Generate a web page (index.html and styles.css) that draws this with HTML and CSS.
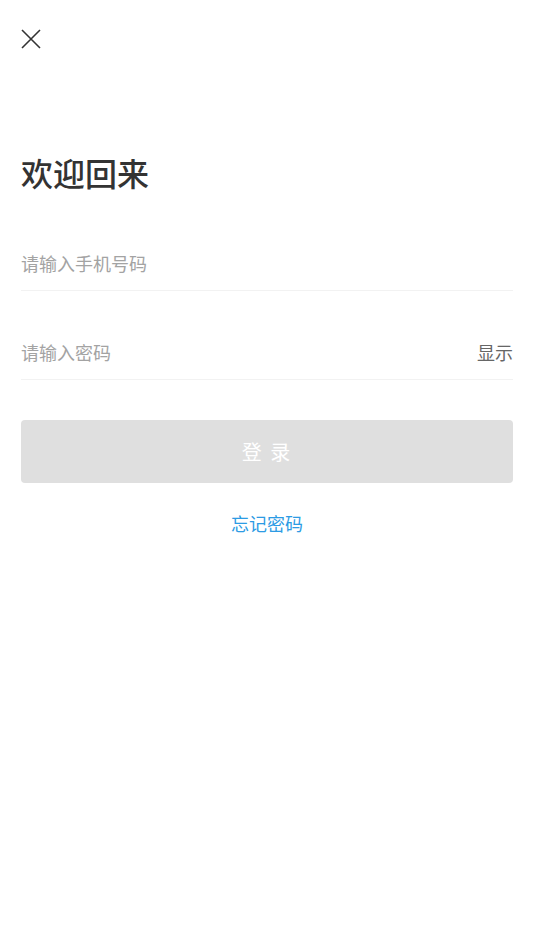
FILE: index.html
```html
<!DOCTYPE html>
<html lang="zh-CN">
<head>
    <meta charset="UTF-8">
    <meta name="viewport" content="width=device-width, initial-scale=1.0">
    <title>登录</title>
    <link rel="stylesheet" href="styles.css">
</head>
<body>
    <div class="page">
        <!-- Close button -->
        <div class="topbar">
            <svg class="close" width="20" height="20" viewBox="0 0 20 20">
                <path d="M1 1 L19 19 M19 1 L1 19" stroke="#333" stroke-width="1.6" fill="none"/>
            </svg>
        </div>

        <h1 class="title">欢迎回来</h1>

        <!-- Login form -->
        <form class="login-form">
            <div class="field">
                <input type="text" class="field-input" placeholder="请输入手机号码">
            </div>
            <div class="field">
                <input type="password" class="field-input" placeholder="请输入密码">
                <span class="field-action">显示</span>
            </div>
            <button type="button" class="login-btn">登 录</button>
        </form>

        <div class="forgot">忘记密码</div>
    </div>
</body>
</html>
```

FILE: styles.css
```css
body {
    font-family: 'Noto Sans CJK SC', 'Noto Sans', sans-serif;
    margin: 0;
    padding: 0;
    background: #fff;
}

.page {
    padding: 0 21px;
}

.topbar {
    height: 78px;
    padding-top: 29px;
    box-sizing: border-box;
}

.close {
    display: block;
}

.title {
    margin: 78px 0 0;
    font-size: 32px;
    line-height: 32px;
    font-weight: 500;
    color: #333;
}

.login-form {
    margin-top: 48px;
}

.field {
    display: flex;
    align-items: center;
    height: 54px;
    border-bottom: 1px solid #f2f2f2;
    margin-bottom: 34px;
}

.field:last-of-type {
    margin-bottom: 40px;
}

.field-input {
    flex: 1;
    border: none;
    outline: none;
    padding: 0;
    font-family: inherit;
    font-size: 18px;
    color: #333;
    background: transparent;
}

.field-input::placeholder {
    color: #a3a3a3;
}

.field-action {
    font-size: 18px;
    color: #666;
}

.login-btn {
    display: block;
    width: 100%;
    height: 63px;
    border: none;
    border-radius: 4px;
    background: #dfdfdf;
    color: #fff;
    font-family: inherit;
    font-size: 20px;
    letter-spacing: 2px;
}

.forgot {
    margin-top: 28px;
    text-align: center;
    font-size: 18px;
    line-height: 24px;
    color: #2c9be4;
}
```
